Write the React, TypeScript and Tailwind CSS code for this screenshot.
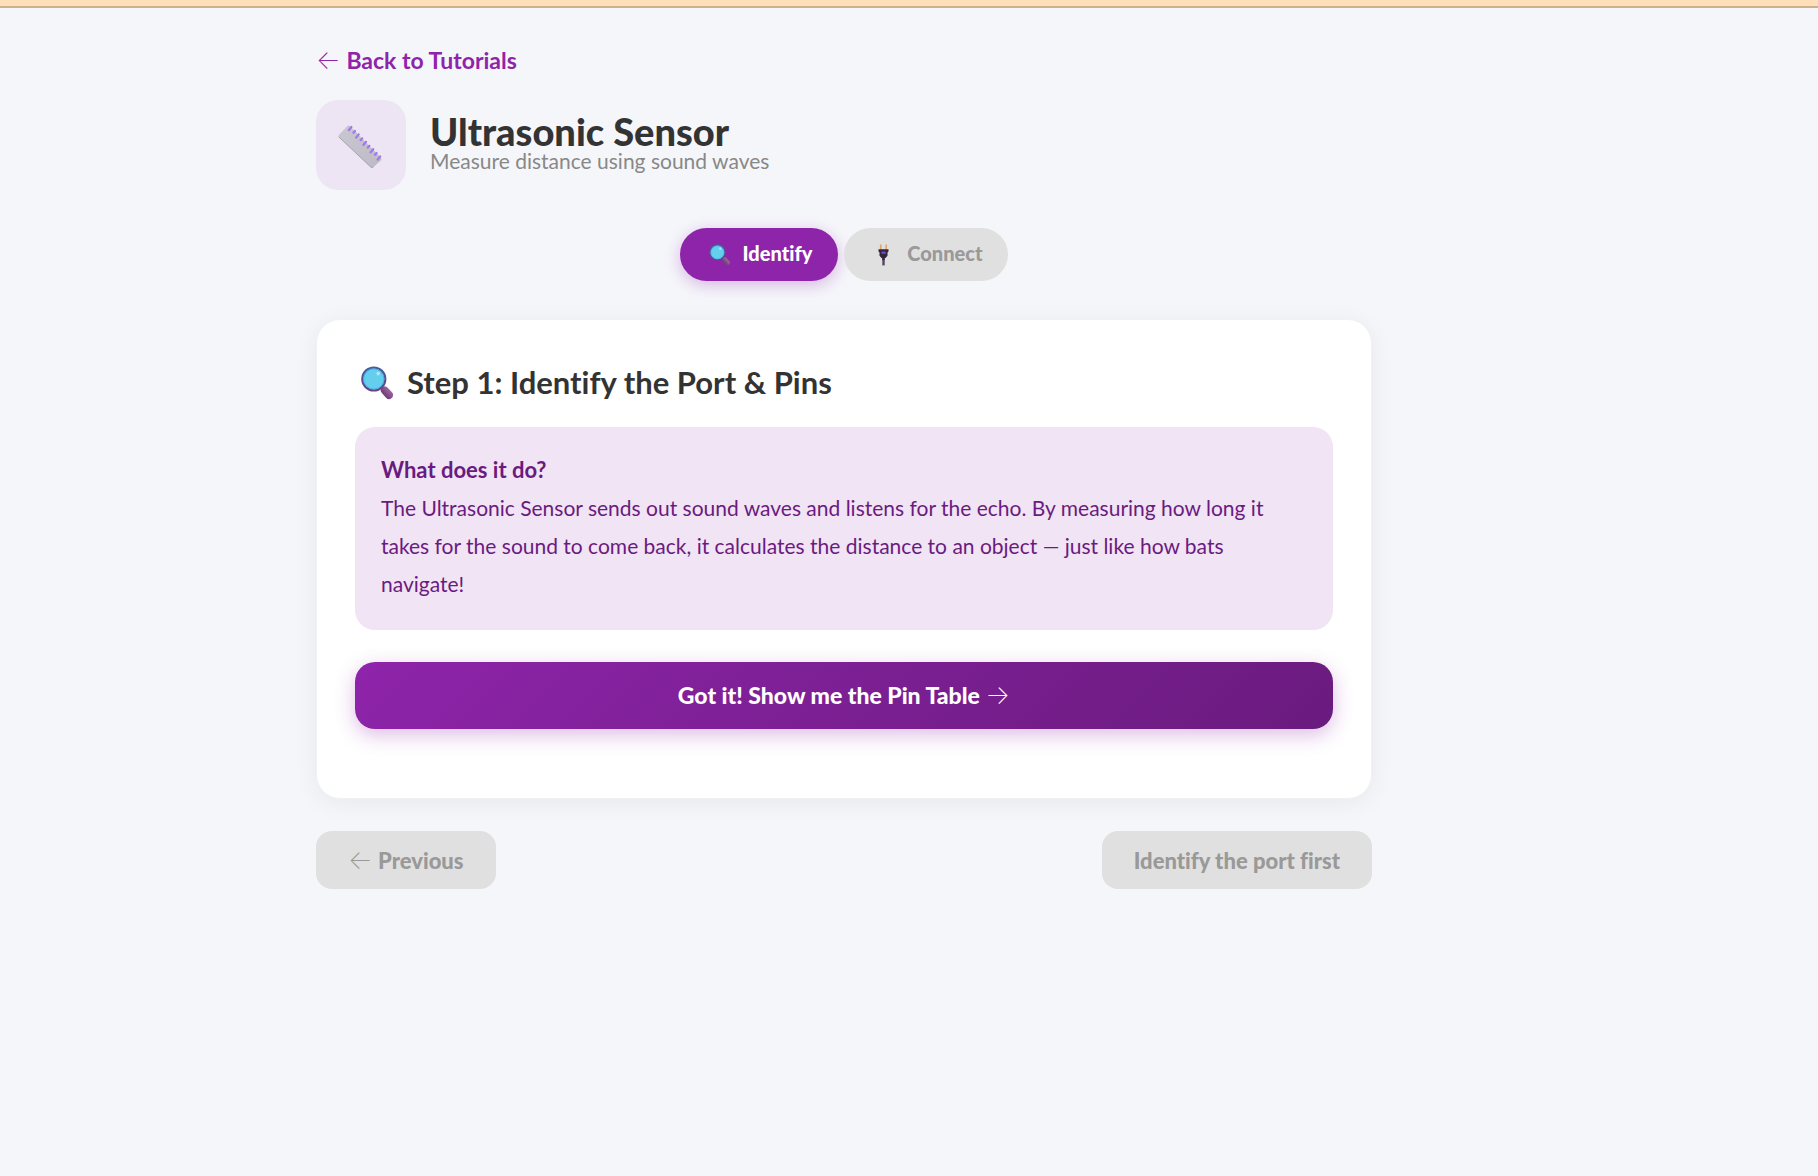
import React, { useState } from 'react';

type StepId = 'identify' | 'connect';

const FONT = "font-['Lato','Open_Sans',sans-serif] [font-variant-ligatures:none]";

function Arrow({ children }: { children: string }) {
  return <span className="font-['Inter',sans-serif] text-[26px] leading-none font-extralight">{children}</span>;
}

function RulerIcon({ className }: { className?: string }) {
  return (
    <svg viewBox="0 0 46 46" className={className} aria-hidden="true">
      <defs>
        <linearGradient id="ruler-body" x1="0" y1="0" x2="1" y2="1">
          <stop offset="0" stopColor="#c9c7cf" />
          <stop offset="1" stopColor="#bebbc8" />
        </linearGradient>
      </defs>
      <path
        d="M1.2 12.6 L9.2 4.2 Q10.7 2.8 12.2 4.2 L42.8 35.4 Q44.2 36.9 42.8 38.4 L35.6 45 Q34.1 46 32.6 44.9 L1.2 15.5 Q-.1 14 1.2 12.6Z"
        fill="url(#ruler-body)"
      />
      <path d="M.7 14.8 L32.600 44.900 Q34.100 46 35.600 45" fill="none" stroke="#a9a5ad" strokeWidth="1" />
      <path
        d="M13.400 5l-2.600 3.200M20.700 12.400l-2.600 3.200M28 19.800l-2.600 3.200M35.200 27.200l-2.600 3.200M42.200 34.400l-2.600 3.200M17 9l-1.600 1.800M24.200 16.400l-1.600 1.800M31.400 23.800l-1.600 1.800M38.600 31l-1.600 1.800"
        stroke="#a077ec"
        strokeWidth="2.200"
        strokeLinecap="round"
      />
    </svg>
  );
}

function MagnifierIcon({ className }: { className?: string }) {
  return (
    <svg viewBox="0 0 32 34" className={className} aria-hidden="true">
      <defs>
        <linearGradient id="lens-rim" x1="0" y1="0" x2="0" y2="1">
          <stop offset="0" stopColor="#3f5f9f" />
          <stop offset="1" stopColor="#6b3f86" />
        </linearGradient>
        <linearGradient id="lens-handle" x1="0" y1="1" x2="1" y2="0">
          <stop offset="0" stopColor="#733f79" />
          <stop offset="1" stopColor="#99619b" />
        </linearGradient>
      </defs>
      <path d="M19 20l4 4" stroke="#5d4577" strokeWidth="2.4" />
      <path d="M23.800 24.400l4.200 4.600" stroke="url(#lens-handle)" strokeWidth="8" strokeLinecap="round" />
      <circle cx="12.800" cy="13" r="11.600" fill="#63cfec" stroke="url(#lens-rim)" strokeWidth="2" />
      <circle cx="12.800" cy="13" r="10.200" fill="none" stroke="#3fa5df" strokeWidth="0.8" />
      <ellipse cx="17.200" cy="7.400" rx="1.700" ry="2" fill="#b3e4fb" />
    </svg>
  );
}

function PlugIcon({ className }: { className?: string }) {
  return (
    <svg viewBox="0 0 22 22" className={className} aria-hidden="true">
      <path d="M8.300 1.200v4.600M13.700 1.200v4.600" stroke="#e0a872" strokeWidth="1.800" strokeLinecap="round" />
      <path d="M6 5.200h10v2.400l-1 .8v3.400l-2 2.200H9l-2-2.200V8.400l-1-.8z" fill="#30243f" />
      <path d="M9 7.600h4.200v2.200H9z" fill="#7448cf" />
      <path d="M9.600 13.800h2.800v2.400H9.600z" fill="#342a42" />
      <path d="M11 16v5.400" stroke="#51475c" strokeWidth="2.400" />
    </svg>
  );
}

const STEPS = [
  { id: 'identify' as StepId, label: 'Identify', Icon: MagnifierIcon, locked: false },
  { id: 'connect' as StepId, label: 'Connect', Icon: PlugIcon, locked: true },
];

export default function App() {
  const [step, setStep] = useState<StepId>('identify');

  return (
    <div className={`min-h-screen bg-[#f5f6fa] ${FONT}`}>
      {/* Top strip */}
      <div className="h-2 border-b-2 border-[#cdb08c] bg-[#ffdfb8]" />

      <main className="px-6 pt-9 pb-12 lg:pr-[154px]">
        <div className="mx-auto max-w-[1056px]">
          <a href="#tutorials" className="block w-fit text-[23px] leading-8 font-bold text-[#8e24aa]">
            <Arrow>←</Arrow> Back to Tutorials
          </a>

          {/* Title */}
          <header className="mt-6 flex items-center gap-6">
            <div className="flex size-[90px] shrink-0 items-center justify-center rounded-[22px] bg-[#ede5f4]">
              <RulerIcon className="size-[46px]" />
            </div>
            <div className="pb-1">
              <h1 className="text-[38px] leading-9 font-black text-[#333]">Ultrasonic Sensor</h1>
              <p className="text-[21px] leading-6 text-[#888]">Measure distance using sound waves</p>
            </div>
          </header>

          {/* Step pills */}
          <nav className="mt-[38px] flex justify-center gap-1.5">
            {STEPS.map(({ id, label, Icon, locked }) => (
              <button
                key={id}
                type="button"
                disabled={locked}
                onClick={() => setStep(id)}
                className={`flex h-[53px] items-center gap-2.5 rounded-full px-[26px] text-[20px] font-black ${
                  step === id
                    ? 'bg-[#8e24aa] text-white shadow-[0_4px_16px_rgba(142,36,170,0.3)]'
                    : 'bg-[#e0e0e0] text-[#999]'
                }`}
              >
                <Icon className="h-[22px] w-[27px]" />
                <span className="pb-1">{label}</span>
              </button>
            ))}
          </nav>

          {/* Step card */}
          <section className="mt-[38px] rounded-3xl border border-[#f0f1f4] bg-white px-[38px] pt-10 pb-[69px] shadow-[0_4px_24px_rgba(0,0,0,0.06)]">
            <h2 className="flex items-center gap-3.5 pl-1.5 text-[31px] leading-[45px] font-bold text-[#333]">
              <MagnifierIcon className="h-[34px] w-8" />
              Step 1: Identify the Port &amp; Pins
            </h2>

            <div className="mt-[22px] rounded-[20px] bg-[#f1e4f4] px-[26px] pt-6 pb-[27px] text-[21px] leading-[38px] text-[#6a1b80]">
              <strong className="block text-[22px] font-bold">What does it do?</strong>
              <p>
                The Ultrasonic Sensor sends out sound waves and listens for the echo. By measuring how long it takes
                for the sound to come back, it calculates the distance to an object — just like how bats navigate!
              </p>
            </div>

            <button
              type="button"
              className="mt-8 h-[67px] w-full rounded-[20px] bg-linear-135 from-[#8e24aa] to-[#6a1b7e] text-[23px] font-black text-white shadow-[0_6px_20px_rgba(142,36,170,0.3)]"
            >
              Got it! Show me the Pin Table <Arrow>→</Arrow>
            </button>
          </section>

          {/* Step navigation */}
          <div className="mt-8 flex justify-between">
            <button type="button" disabled className="h-[58px] rounded-2xl bg-[#e0e0e0] px-8 text-[22px] font-black text-[#999]">
              <Arrow>←</Arrow> Previous
            </button>
            <button type="button" disabled className="h-[58px] rounded-2xl bg-[#e0e0e0] px-8 text-[22px] font-black text-[#999]">
              Identify the port first
            </button>
          </div>
        </div>
      </main>
    </div>
  );
}
